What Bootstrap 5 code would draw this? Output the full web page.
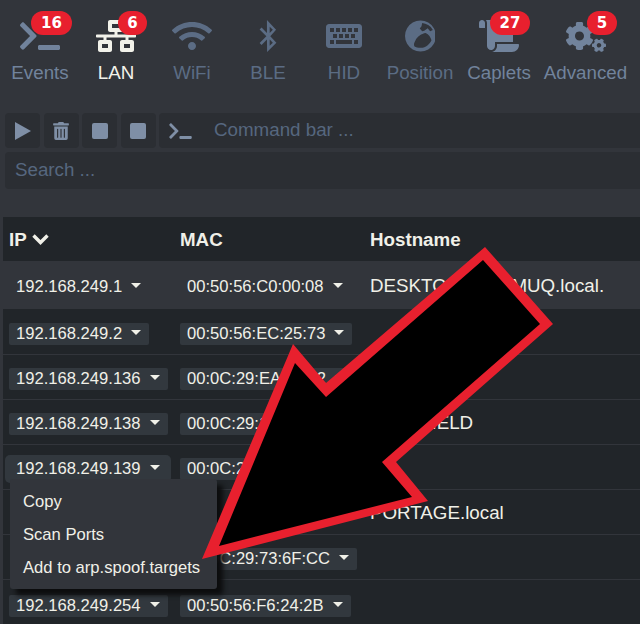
<!DOCTYPE html>
<html lang="en">
<head>
<meta charset="utf-8">
<title>bettercap</title>
<link rel="stylesheet" href="https://cdn.jsdelivr.net/npm/bootstrap@5.3.0/dist/css/bootstrap.min.css">
<style>
html,body{height:624px;overflow:hidden}
body{background:#32353b;font-family:"Liberation Sans",Arial,sans-serif;color:#f0f0e8;position:relative}
.topnav{padding:11px 0 0 2px;height:108px}
.tab{position:relative;width:76px;height:76px;display:flex;flex-direction:column;align-items:center;padding:0;color:#5b6c84;font-size:18.75px;line-height:22px;text-decoration:none;flex:none}
.tab svg{display:block;height:32px;width:auto;fill:currentColor;margin-top:9px;margin-bottom:10px}
.tab.lit{color:#71839c}
.tab.on{color:#f2f2ea}
.tab.cap{width:76px;margin-left:3px}
.tab.adv{width:97px}
.pill{position:absolute;top:0;background:#e8202e;color:#fff;font:700 15px/24px "DejaVu Sans",sans-serif;height:24px;border-radius:12px;text-align:center}
.tools{padding:5px 0 0 5px;gap:3.5px;height:44px}
.tool{width:35px;height:35px;background:#2b2e33;border-radius:4px;display:flex;align-items:center;justify-content:center;color:#7f8fa6;flex:none}
.tool svg{fill:currentColor;display:block}
.cmdbox{flex:1;background:#2b2e33;border-radius:4px 0 0 4px;height:35px;display:flex;align-items:center;padding-left:10px;color:#7f8fa6}
.cmdbox svg{fill:currentColor;flex:none;margin-right:22px}
.cmdinput,.cmdinput:focus{background:transparent;border:0;box-shadow:none;padding:0 0 2px;font-size:18.75px;color:#fff;height:35px;line-height:33px;border-radius:0}
.cmdinput::placeholder{color:#56677f;opacity:1}
.findrow{margin:0 0 0 5px;height:37px;background:#2b2e33;border-radius:4px 0 0 4px;padding-left:10px}
.findrow .cmdinput{height:37px}
.sheet{margin:28px 0 0 3px;width:637px;table-layout:fixed;border-collapse:collapse;--bs-table-bg:#212529;--bs-table-color:#f0f0e8;--bs-table-border-color:#32353b;margin-bottom:0}
.sheet>:not(caption)>*>*{padding:3px 6px 0;vertical-align:middle;border-bottom:1px solid #32353b;background:#212529;color:#f0f0e8;box-shadow:none}
.sheet thead tr{height:44px}
.sheet thead th{font-size:18.75px;font-weight:700;border-bottom:0;line-height:1}
.sheet tbody tr{height:45px}
.sheet tbody tr.first{height:48px}
.sheet tbody tr.final{height:49px}
.sheet tbody tr.first>td{background:#32353b;border-bottom:0}
.sheet td{font-size:18.75px}
.chip{display:inline-flex;align-items:center;height:22px;background:#32383e;border:0;border-radius:2px;padding:0 7px;color:#f0f0e8;font-size:16.6px;line-height:22px;white-space:nowrap}
.first .chip{background:transparent}
.chip i{display:block;margin-left:9px;width:0;height:0;border-left:5px solid transparent;border-right:5px solid transparent;border-top:5px solid #f0f0e8;margin-bottom:3px;margin-right:1px}
.chip.open{height:28px;border-radius:5px;margin-left:-4px;padding:0 10px 0 11px}
.sortmark{vertical-align:1px}
.menubox{display:block;position:absolute;left:10px;top:479px;width:207px;height:110px;background:#32353b;border:0;border-radius:3px;padding:6px 0;box-shadow:6px 6px 5px #0c0d0e;margin:0;z-index:3}
.menubox .dropdown-item{padding:0 13px;height:33px;line-height:33px;color:#f0f0e8;font-size:16.6px;background:transparent}
.arrowmark{position:absolute;left:0;top:0;width:640px;height:624px;z-index:5;pointer-events:none}
</style>
</head>
<body>
<nav class="topnav d-flex">
  <a class="tab lit" href="#"><svg viewBox="0 0 640 512"><path d="M257.981 272.971L63.638 467.314c-9.373 9.373-24.569 9.373-33.941 0L7.029 444.647c-9.357-9.357-9.375-24.522-.04-33.901L161.011 256 6.99 101.255c-9.335-9.379-9.317-24.544.04-33.901l22.667-22.667c9.373-9.373 24.569-9.373 33.941 0L257.981 239.03c9.373 9.372 9.373 24.568 0 33.941zM640 456v-32c0-13.255-10.745-24-24-24H312c-13.255 0-24 10.745-24 24v32c0 13.255 10.745 24 24 24h304c13.255 0 24-10.745 24-24z"/></svg>Events<span class="pill" style="left:29px;width:41px">16</span></a>
  <a class="tab on" href="#"><svg viewBox="0 0 640 512"><path d="M640 264v-16c0-8.84-7.16-16-16-16H344v-40h72c17.67 0 32-14.33 32-32V32c0-17.67-14.33-32-32-32H224c-17.67 0-32 14.33-32 32v128c0 17.67 14.33 32 32 32h72v40H16c-8.84 0-16 7.16-16 16v16c0 8.84 7.16 16 16 16h104v40H64c-17.67 0-32 14.33-32 32v128c0 17.67 14.33 32 32 32h160c17.67 0 32-14.33 32-32V352c0-17.67-14.33-32-32-32h-56v-40h304v40h-56c-17.67 0-32 14.33-32 32v128c0 17.67 14.33 32 32 32h160c17.67 0 32-14.33 32-32V352c0-17.67-14.33-32-32-32h-56v-40h104c8.84 0 16-7.16 16-16zM256 128V64h128v64H256zm-64 320H96v-64h96v64zm352 0h-96v-64h96v64z"/></svg>LAN<span class="pill" style="left:40px;width:29px">6</span></a>
  <a class="tab" href="#"><svg viewBox="0 0 640 512"><path d="M634.91 154.88C457.74-8.99 182.19-8.93 5.09 154.88c-6.66 6.16-6.79 16.59-.35 22.98l34.24 33.97c6.14 6.1 16.02 6.23 22.4.38 145.92-133.68 371.3-133.71 517.25 0 6.38 5.85 16.26 5.71 22.4-.38l34.24-33.97c6.43-6.39 6.3-16.82-.36-22.98zM320 352c-35.35 0-64 28.65-64 64s28.65 64 64 64 64-28.65 64-64-28.65-64-64-64zm202.67-83.59c-115.26-101.93-290.21-101.82-405.34 0-6.9 6.1-7.12 16.69-.57 23.15l34.44 33.99c6 5.92 15.66 6.32 22.05.8 83.95-72.57 209.74-72.41 293.49 0 6.39 5.52 16.05 5.13 22.05-.8l34.44-33.99c6.56-6.46 6.33-17.06-.56-23.15z"/></svg>WiFi</a>
  <a class="tab" href="#"><svg viewBox="0 0 320 512"><path d="M196.48 260.023l92.626-103.333L143.125 0v206.33l-86.111-86.111-31.406 31.405 108.061 108.399L25.608 368.422l31.406 31.405 86.111-86.111L145.84 512l148.552-148.644-97.912-103.333zm40.86-102.996l-49.977 49.978-.338-100.295 50.315 50.317zM187.363 313.04l49.977 49.978-50.315 50.316.338-100.294z"/></svg>BLE</a>
  <a class="tab" href="#"><svg viewBox="0 0 576 512"><path fill-rule="evenodd" d="M48 64h480c26 0 48 22 48 48v288c0 26-22 48-48 48H48c-26 0-48-22-48-48V112c0-26 22-48 48-48zM64 128v64h64v-64zm96 0v64h64v-64zm96 0v64h64v-64zm96 0v64h64v-64zm96 0v64h64v-64zM112 224v64h64v-64zm96 0v64h64v-64zm96 0v64h64v-64zm96 0v64h64v-64zM64 320v64h64v-64zm96 0v64h256v-64zm288 0v64h64v-64z"/></svg>HID</a>
  <a class="tab" href="#"><svg viewBox="0 0 90 93"><path fill-rule="evenodd" d="M45 1.5a45 45 0 1 0 .01 0zM30 60c6-12 18-20 30-22 9 4 15 13 17 21-5 11-16 22-31 22-9 0-14-2-19-5-2-6 0-11 3-16zM50 9c12 1 24 8 31 20l-8 4-7-9-10 7-6 2-7-8 5-7z"/></svg>Position</a>
  <a class="tab lit cap" href="#"><svg viewBox="0 0 640 512"><path d="M48 0C21.53 0 0 21.53 0 48v64c0 8.84 7.16 16 16 16h80V48C96 21.53 74.47 0 48 0zm208 412.57V352h288V96c0-52.94-43.06-96-96-96H111.59C121.74 13.41 128 29.92 128 48v368c0 38.87 34.65 69.65 74.75 63.12C234.22 474 256 444.46 256 412.57zM288 384v32c0 52.93-43.06 96-96 96h336c61.86 0 112-50.14 112-112 0-8.84-7.16-16-16-16H288z"/></svg>Caplets<span class="pill" style="left:29px;width:40px">27</span></a>
  <a class="tab lit adv" href="#"><svg viewBox="0 0 640 512"><path d="M512.1 191l-8.2 14.3c-3 5.3-9.4 7.5-15.1 5.4-11.8-4.4-22.6-10.7-32.1-18.6-4.6-3.8-5.8-10.5-2.8-15.7l8.2-14.3c-6.9-8-12.3-17.3-15.9-27.4h-16.5c-6 0-11.2-4.3-12.2-10.3-2-12-2.1-24.6 0-37.1 1-6 6.2-10.4 12.2-10.4h16.5c3.6-10.1 9-19.4 15.9-27.4l-8.2-14.3c-3-5.2-1.9-11.9 2.8-15.7 9.5-7.9 20.4-14.2 32.1-18.6 5.7-2.1 12.1.1 15.1 5.4l8.2 14.3c10.5-1.9 21.2-1.9 31.7 0L552 6.3c3-5.3 9.4-7.5 15.1-5.4 11.8 4.4 22.6 10.7 32.1 18.6 4.6 3.8 5.8 10.5 2.8 15.7l-8.2 14.3c6.9 8 12.3 17.3 15.9 27.4h16.5c6 0 11.2 4.3 12.2 10.3 2 12 2.1 24.6 0 37.1-1 6-6.2 10.4-12.2 10.4h-16.5c-3.6 10.1-9 19.4-15.9 27.4l8.2 14.3c3 5.2 1.9 11.9-2.8 15.7-9.5 7.9-20.4 14.2-32.1 18.6-5.7 2.1-12.1-.1-15.1-5.4l-8.2-14.3c-10.4 1.9-21.2 1.9-31.7 0zm-10.5-58.8c38.5 29.6 82.4-14.3 52.8-52.8-38.5-29.7-82.4 14.3-52.8 52.8zM386.3 286.1l33.7 16.8c10.1 5.8 14.5 18.1 10.5 29.1-8.9 24.2-26.4 46.4-42.6 65.8-7.4 8.9-20.2 11.1-30.3 5.3l-29.1-16.8c-16 13.7-34.6 24.6-54.9 31.7v33.6c0 11.6-8.3 21.6-19.7 23.6-24.6 4.2-50.4 4.4-75.9 0-11.5-2-20-11.9-20-23.6V418c-20.3-7.2-38.9-18-54.9-31.7L74 403c-10 5.8-22.9 3.6-30.3-5.3-16.2-19.4-33.3-41.6-42.2-65.7-4-10.9.4-23.2 10.5-29.1l33.3-16.8c-3.9-20.9-3.9-42.4 0-63.4L12 205.8c-10.1-5.8-14.6-18.1-10.5-29 8.9-24.2 26-46.4 42.2-65.8 7.4-8.9 20.2-11.1 30.3-5.3l29.1 16.8c16-13.7 34.6-24.6 54.9-31.7V57.1c0-11.5 8.2-21.5 19.6-23.5 24.6-4.2 50.5-4.4 76-.1 11.5 2 20 11.9 20 23.6v33.6c20.3 7.2 38.9 18 54.9 31.7l29.1-16.8c10-5.8 22.9-3.6 30.3 5.3 16.2 19.4 33.2 41.6 42.1 65.8 4 10.9.1 23.2-10 29.1l-33.7 16.8c3.9 21 3.9 42.5 0 63.5zm-117.6 21.1c59.2-77-28.7-164.9-105.7-105.7-59.2 77 28.7 164.9 105.7 105.7zm243.4 182.7l-8.2 14.3c-3 5.3-9.4 7.5-15.1 5.4-11.8-4.4-22.6-10.7-32.1-18.6-4.6-3.8-5.8-10.5-2.8-15.7l8.2-14.3c-6.9-8-12.3-17.3-15.9-27.4h-16.5c-6 0-11.2-4.3-12.2-10.3-2-12-2.1-24.6 0-37.1 1-6 6.2-10.4 12.2-10.4h16.5c3.6-10.1 9-19.4 15.9-27.4l-8.2-14.3c-3-5.2-1.9-11.9 2.8-15.7 9.5-7.9 20.4-14.2 32.1-18.6 5.7-2.1 12.1.1 15.1 5.4l8.2 14.3c10.5-1.9 21.2-1.9 31.7 0l8.2-14.3c3-5.3 9.4-7.5 15.1-5.4 11.8 4.4 22.6 10.7 32.1 18.6 4.6 3.8 5.8 10.5 2.8 15.7l-8.2 14.3c6.9 8 12.3 17.3 15.9 27.4h16.5c6 0 11.2 4.3 12.2 10.3 2 12 2.1 24.6 0 37.1-1 6-6.2 10.4-12.2 10.4h-16.5c-3.6 10.1-9 19.4-15.9 27.4l8.2 14.3c3 5.2 1.9 11.9-2.8 15.7-9.5 7.9-20.4 14.2-32.1 18.6-5.7 2.1-12.1-.1-15.1-5.4l-8.2-14.3c-10.4 1.9-21.2 1.9-31.7 0zM501.6 431c38.5 29.6 82.4-14.3 52.8-52.8-38.5-29.6-82.4 14.3-52.8 52.8z"/></svg>Advanced<span class="pill" style="left:50px;width:30px">5</span></a>
</nav>
<div class="tools d-flex">
  <div class="tool"><svg width="16" height="18" viewBox="0 0 16 18"><path d="M0 0l16 9-16 9z"/></svg></div>
  <div class="tool"><svg width="16" height="18" viewBox="0 0 448 512"><path d="M32 464a48 48 0 0 0 48 48h288a48 48 0 0 0 48-48V128H32zm272-256a16 16 0 0 1 32 0v224a16 16 0 0 1-32 0zm-96 0a16 16 0 0 1 32 0v224a16 16 0 0 1-32 0zm-96 0a16 16 0 0 1 32 0v224a16 16 0 0 1-32 0zM432 32H312l-9.4-18.7A24 24 0 0 0 281.1 0H166.8a23.72 23.72 0 0 0-21.4 13.3L136 32H16A16 16 0 0 0 0 48v32a16 16 0 0 0 16 16h416a16 16 0 0 0 16-16V48a16 16 0 0 0-16-16z"/></svg></div>
  <div class="tool"><svg width="16" height="16" viewBox="0 0 16 16"><rect width="16" height="16" rx="2"/></svg></div>
  <div class="tool"><svg width="16" height="16" viewBox="0 0 16 16"><rect width="16" height="16" rx="2"/></svg></div>
  <div class="cmdbox"><svg width="23" height="18" viewBox="0 0 640 512"><path d="M257.981 272.971L63.638 467.314c-9.373 9.373-24.569 9.373-33.941 0L7.029 444.647c-9.357-9.357-9.375-24.522-.04-33.901L161.011 256 6.99 101.255c-9.335-9.379-9.317-24.544.04-33.901l22.667-22.667c9.373-9.373 24.569-9.373 33.941 0L257.981 239.03c9.373 9.372 9.373 24.568 0 33.941zM640 456v-32c0-13.255-10.745-24-24-24H312c-13.255 0-24 10.745-24 24v32c0 13.255 10.745 24 24 24h304c13.255 0 24-10.745 24-24z"/></svg><input class="form-control cmdinput" placeholder="Command bar ..."></div>
</div>
<div class="findrow"><input class="form-control cmdinput" placeholder="Search ..."></div>
<table class="table sheet">
  <colgroup><col style="width:171px"><col style="width:190px"><col></colgroup>
  <thead><tr><th>IP <svg class="sortmark" width="17" height="11" viewBox="0 0 17 11"><path d="M1.5 1.5l7 7 7-7" fill="none" stroke="#f0f0e8" stroke-width="3.4"/></svg></th><th>MAC</th><th>Hostname</th></tr></thead>
  <tbody>
    <tr class="first"><td><button class="chip">192.168.249.1<i></i></button></td><td><button class="chip">00:50:56:C0:00:08<i></i></button></td><td>DESKTOP-A3K5MUQ.local.</td></tr>
    <tr><td><button class="chip">192.168.249.2<i></i></button></td><td><button class="chip">00:50:56:EC:25:73<i></i></button></td><td></td></tr>
    <tr><td><button class="chip">192.168.249.136<i></i></button></td><td><button class="chip">00:0C:29:EA:11:22<i></i></button></td><td></td></tr>
    <tr><td><button class="chip">192.168.249.138<i></i></button></td><td><button class="chip">00:0C:29:11:22:33<i></i></button></td><td>BAKEFIELD</td></tr>
    <tr><td><button class="chip open">192.168.249.139<i></i></button></td><td><button class="chip">00:0C:29:44:55:66<i></i></button></td><td></td></tr>
    <tr><td></td><td></td><td>PORTAGE.local</td></tr>
    <tr><td></td><td><button class="chip">00:0C:29:73:6F:CC<i></i></button></td><td></td></tr>
    <tr class="final"><td><button class="chip">192.168.249.254<i></i></button></td><td><button class="chip">00:50:56:F6:24:2B<i></i></button></td><td></td></tr>
  </tbody>
</table>
<ul class="dropdown-menu menubox">
  <li><a class="dropdown-item" href="#">Copy</a></li>
  <li><a class="dropdown-item" href="#">Scan Ports</a></li>
  <li><a class="dropdown-item" href="#">Add to arp.spoof.targets</a></li>
</ul>
<svg class="arrowmark" viewBox="0 0 640 624"><polygon fill="#e8202e" points="485,247 553,324 396,462 428,501 202,559 293,344 326,383"/><polygon fill="#000" points="483,260 540,324 382,462 412,497 219,546 295,363 326,397"/></svg>
</body>
</html>
